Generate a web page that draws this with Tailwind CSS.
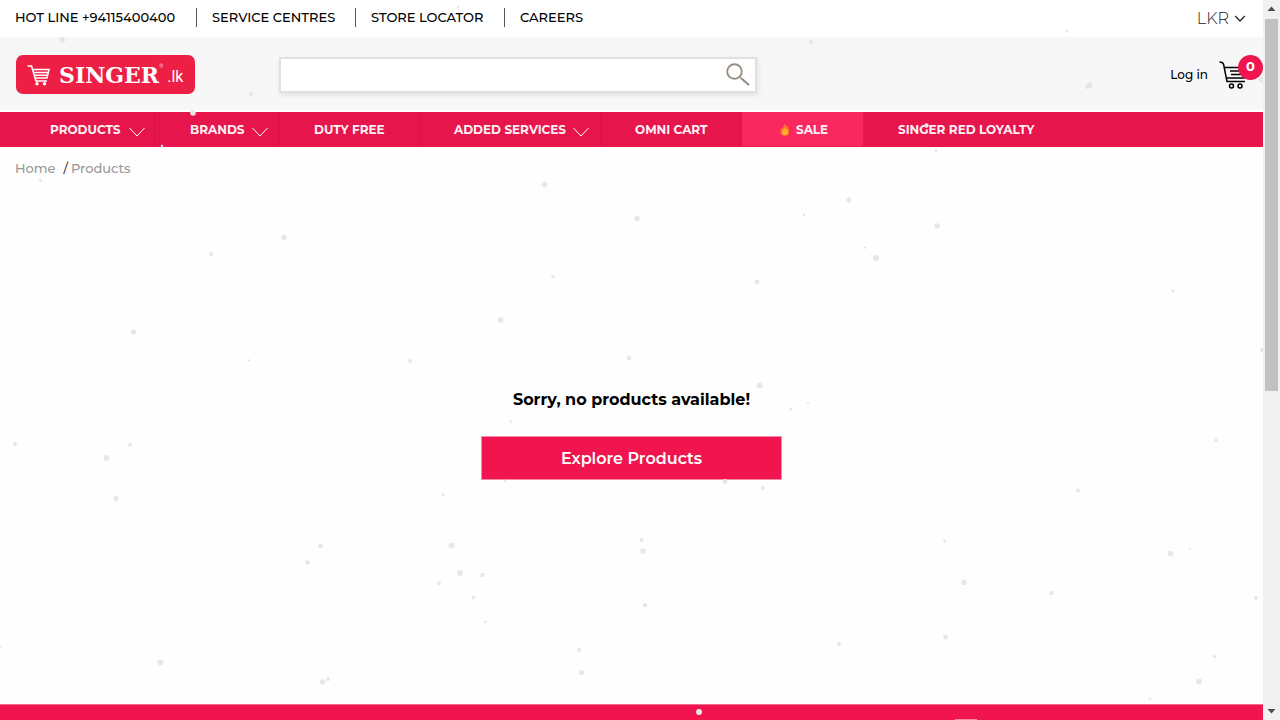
<!DOCTYPE html>
<html lang="en">
<head>
<meta charset="utf-8">
<meta name="viewport" content="width=device-width, initial-scale=1">
<title>Products | Singer.lk</title>
<script src="https://cdn.jsdelivr.net/npm/@tailwindcss/browser@4"></script>
</head>
<body class="flex min-h-screen bg-white font-['Montserrat','Inter',sans-serif] text-black">
<div class="relative flex min-w-0 flex-1 flex-col overflow-hidden">
  <div class="flex h-[37px] shrink-0 items-center justify-between pr-[17px] pl-[15px]">
    <nav class="flex items-center pb-[3px] text-[13px] leading-[19px] font-medium whitespace-nowrap" aria-label="Services">
      <a href="#" class="w-[181px]">HOT LINE +94115400400</a>
      <a href="#" class="w-[159px] border-l border-[#555] pl-[15px]">SERVICE CENTRES</a>
      <a href="#" class="w-[149px] border-l border-[#555] pl-[15px]">STORE LOCATOR</a>
      <a href="#" class="border-l border-[#555] pl-[15px]">CAREERS</a>
    </nav>
    <button type="button" class="flex items-center gap-[5px] text-base font-light text-[#222]">LKR
      <svg class="h-3 w-3" viewBox="0 0 12 12" fill="none" stroke="#222" stroke-width="1.200"><path d="M1.300 3L6 8L10.700 3"/></svg>
    </button>
  </div>

  <header class="flex h-[73px] shrink-0 items-center bg-[#f7f7f7] pt-[2px] pl-4">
    <a href="#" aria-label="Singer.lk" class="flex h-[39px] w-[179px] shrink-0 items-center rounded-[7px] bg-[#ed1f45] pl-[11px] text-white">
      <svg class="h-[22px] w-[24px] shrink-0" viewBox="0 0 24 22" fill="none" stroke="#fff">
        <path d="M.5 2H4.500L9 17H20" stroke-width="1.600"/>
        <path d="M6 5.500H22L20 14H8" stroke-width="1.500"/>
        <path d="M7 8.500H21M8 11.200H20" stroke-width="1.400"/>
        <circle cx="10" cy="19.800" r="1.700" fill="#fff" stroke="none"/><circle cx="17.500" cy="19.800" r="1.700" fill="#fff" stroke="none"/>
      </svg>
      <span class="ml-2 font-['DejaVu_Serif'] text-[22px] leading-none font-bold">SINGER</span>
      <span class="mb-4 text-[5px] leading-none">®</span>
      <span class="mt-1 ml-1 font-['Roboto'] text-base leading-none">.lk</span>
    </a>
    <form class="ml-[84px] flex h-[36px] w-[478px] shrink-0 items-center border-2 border-[#e0e0e0] bg-white pr-[5px] shadow-[1px_2px_5px_#00000018]" onsubmit="return false">
      <input type="search" aria-label="Search products" class="min-w-0 flex-1 self-stretch bg-transparent px-3 text-sm outline-none">
      <button type="submit" aria-label="Search">
        <svg class="h-6 w-6" viewBox="0 0 24 24" fill="none" stroke="#978d82"><circle cx="8.500" cy="8.500" r="7.300" stroke-width="1.900"/><path d="M13.700 13.800L16 16" stroke-width="1.200"/><path d="M15.500 15.500L23 22" stroke-width="2.200"/></svg>
      </button>
    </form>
    <div class="ml-auto flex items-center gap-[11px]">
      <a href="#" class="text-xs font-medium">Log in</a>
      <a href="#" class="relative flex h-9 w-11 items-center" aria-label="Cart, 0 items">
        <svg class="h-7 w-7" viewBox="0 0 28 28" fill="none" stroke="#000" stroke-width="1.500"><path d="M.5 1Q4 1 4.600 3.500L8 20.500H26"/><path d="M5 6.500H27L25 17H7.500M11 10H24M12 13.500H24"/><circle cx="12.500" cy="25" r="2"/><circle cx="21" cy="25" r="2"/></svg>
        <span class="absolute -top-[2px] right-0 flex h-[25px] w-[25px] items-center justify-center rounded-full bg-[#f0154e] text-[13px] font-bold text-white">0</span>
      </a>
    </div>
  </header>

  <nav aria-label="Main" class="mt-[2px] flex h-[35px] shrink-0 border-b border-[#f0154e] bg-[#e6154c] text-xs leading-[14px] font-bold whitespace-nowrap text-[#fff0f4]">
    <a href="#" class="flex w-[155px] shrink-0 items-center justify-between border-r border-[#d4144a] pt-[2px] pr-[9px] pl-[50px]">PRODUCTS
      <svg class="mt-1 h-[10px] w-4" viewBox="0 0 16 10" fill="none" stroke="#fff"><path d="M.5 1L8 9L15.500 1"/></svg></a>
    <a href="#" class="flex w-[125px] shrink-0 items-center justify-between border-r border-[#d4144a] pt-[2px] pr-[11px] pl-[35px]">BRANDS
      <svg class="mt-1 h-[10px] w-4" viewBox="0 0 16 10" fill="none" stroke="#fff"><path d="M.5 1L8 9L15.500 1"/></svg></a>
    <a href="#" class="flex w-[140px] shrink-0 items-center border-r border-[#d4144a] pt-[2px] pl-[34px]">DUTY FREE</a>
    <a href="#" class="flex w-[181px] shrink-0 items-center justify-between border-r border-[#d4144a] pt-[2px] pr-[11px] pl-[34px]">ADDED SERVICES
      <svg class="mt-1 h-[10px] w-4" viewBox="0 0 16 10" fill="none" stroke="#fff"><path d="M.5 1L8 9L15.500 1"/></svg></a>
    <a href="#" class="flex w-[141px] shrink-0 items-center pt-[2px] pl-[34px]">OMNI CART</a>
    <a href="#" class="flex w-[121px] shrink-0 items-center gap-[6px] bg-[#f9285f] pt-[2px] pl-[38px]">
      <svg class="h-3 w-[10px]" viewBox="0 0 10 12"><path d="M5 0Q6 2 8 3Q10 6 9 9Q8 12 5 12Q1 12 .5 8Q0 5 2 3.500L3 4Q3 2 5 0Z" fill="#ff7424"/><path d="M5 4Q8 6 8 8.500Q8 11 5 11Q2 11 2 8.500Q2 6 5 4Z" fill="#ffb02e"/></svg>SALE</a>
    <a href="#" class="flex shrink-0 items-center pt-[2px] pl-[35px]">SINGER RED LOYALTY</a>
  </nav>

  <main class="flex flex-1 flex-col bg-[#fefefe]">
    <nav aria-label="Breadcrumb" class="flex items-center pt-[11px] pl-[15px] text-[13px] leading-5 font-medium text-[#999]">
      <a href="#">Home</a><span class="mr-[3px] ml-2 font-normal text-black">/</span><a href="#">Products</a>
    </nav>
    <section class="flex flex-1 flex-col items-center pt-[210px] pb-56">
      <h1 class="text-base leading-6 font-bold">Sorry, no products available!</h1>
      <button type="button" class="mt-6 h-[44px] w-[301px] border border-[#f78aa8] bg-[#f0154e] pt-[2px] text-base font-semibold text-white">Explore Products</button>
    </section>
  </main>
  <footer class="flex h-4 shrink-0 items-end border-t border-[#f46b8e] bg-[#f0154e] pl-[955px]"><span class="h-px w-[22px] bg-[#f78aa8]"></span></footer>

  <svg class="pointer-events-none absolute inset-0 h-full w-full" aria-hidden="true" fill="#e7e7e8">
    <circle cx="1263" cy="572" r="52" fill="#fdfdfd"/>
    <circle cx="458" cy="7" r="1.300"/><circle cx="1067" cy="31" r="1.500"/><circle cx="62" cy="40" r="3"/><circle cx="811" cy="42" r="2.200"/><circle cx="251" cy="94" r="2.300"/><circle cx="1089.500" cy="85" r="3"/><circle cx="1087" cy="87" r="2"/><circle cx="1262" cy="80" r="3"/>
    <circle cx="193" cy="113" r="2.800"/><circle cx="162" cy="146" r="1.200"/><circle cx="926.500" cy="125.500" r="2.200"/><circle cx="936" cy="151" r="1.400"/><circle cx="40.500" cy="180.500" r="1.600"/><circle cx="544.500" cy="184.500" r="2.700"/>
    <circle cx="849" cy="200" r="2.700"/><circle cx="804" cy="215" r="1.300"/><circle cx="637" cy="218.500" r="2.700"/><circle cx="937" cy="226" r="2.700"/><circle cx="284" cy="237.500" r="2.700"/><circle cx="865" cy="247.500" r="1.300"/><circle cx="211" cy="254" r="2"/><circle cx="876" cy="258" r="3"/>
    <circle cx="553" cy="276.500" r="1.800"/><circle cx="757" cy="282" r="2.500"/><circle cx="1173" cy="291" r="1.700"/><circle cx="500.500" cy="320" r="2.900"/><circle cx="133.500" cy="332" r="2.500"/><circle cx="1262" cy="350" r="2"/><circle cx="629" cy="358" r="2.200"/><circle cx="249" cy="360.500" r="1.300"/><circle cx="410" cy="361" r="1.900"/>
    <circle cx="759.500" cy="385.500" r="3"/><circle cx="791" cy="409" r="1.500"/><circle cx="808" cy="403" r="1.200"/><circle cx="511" cy="421.500" r="1.300"/><circle cx="15" cy="444" r="1.900"/><circle cx="130" cy="444.500" r="1.900"/><circle cx="1216" cy="440.500" r="1.900"/><circle cx="106.500" cy="458" r="2.900"/>
    <circle cx="505" cy="481" r="1.200"/><circle cx="725" cy="481.500" r="2.400"/><circle cx="763" cy="488" r="1.900"/><circle cx="1078" cy="490.500" r="2"/><circle cx="443" cy="494.500" r="1.600"/><circle cx="116" cy="498.500" r="2.500"/>
    <circle cx="320.500" cy="546" r="2.300"/><circle cx="307.500" cy="562.500" r="2.200"/><circle cx="451.500" cy="545.500" r="2.900"/><circle cx="460" cy="573" r="3"/><circle cx="482.500" cy="575" r="2.200"/><circle cx="439" cy="583.500" r="1.900"/><circle cx="473.500" cy="597.500" r="1.700"/><circle cx="485.500" cy="622" r="1.400"/>
    <circle cx="641.500" cy="540" r="2.100"/><circle cx="643" cy="551" r="2.800"/><circle cx="645" cy="605" r="2.200"/><circle cx="944.500" cy="541" r="1.400"/><circle cx="1170.500" cy="553.500" r="2.800"/><circle cx="1190" cy="549" r="1.100"/><circle cx="964" cy="582.500" r="2.700"/><circle cx="1051.500" cy="593" r="2.200"/><circle cx="1256" cy="598" r="2"/>
    <circle cx="839" cy="644" r="1.900"/><circle cx="945.500" cy="637" r="2.400"/><circle cx="579" cy="650" r="2"/><circle cx="581.500" cy="672.500" r="2.600"/><circle cx="1214.500" cy="656.500" r="1.600"/><circle cx="1199" cy="681.500" r="3"/><circle cx="1150" cy="698.500" r="1.300"/>
    <circle cx="0" cy="647" r="1.300"/><circle cx="160.500" cy="662.500" r="3"/><circle cx="322.500" cy="682" r="2.800"/><circle cx="328" cy="679" r="2"/><circle cx="699" cy="712" r="3"/>
  </svg>
</div>
<div class="flex w-[17px] shrink-0 flex-col items-center bg-[#f1f1f1]" aria-hidden="true">
  <svg class="h-[19px] w-[17px] shrink-0" viewBox="0 0 17 19" fill="#505050"><path d="M4.500 11L8.500 6.500L12.500 11Z"/></svg>
  <div class="h-[372px] w-[13px] shrink-0 bg-[#c1c1c1]"></div>
  <svg class="mt-auto h-[17px] w-[17px] shrink-0" viewBox="0 0 17 17" fill="#505050"><path d="M4.500 6L8.500 10.500L12.500 6Z"/></svg>
</div>
</body>
</html>
